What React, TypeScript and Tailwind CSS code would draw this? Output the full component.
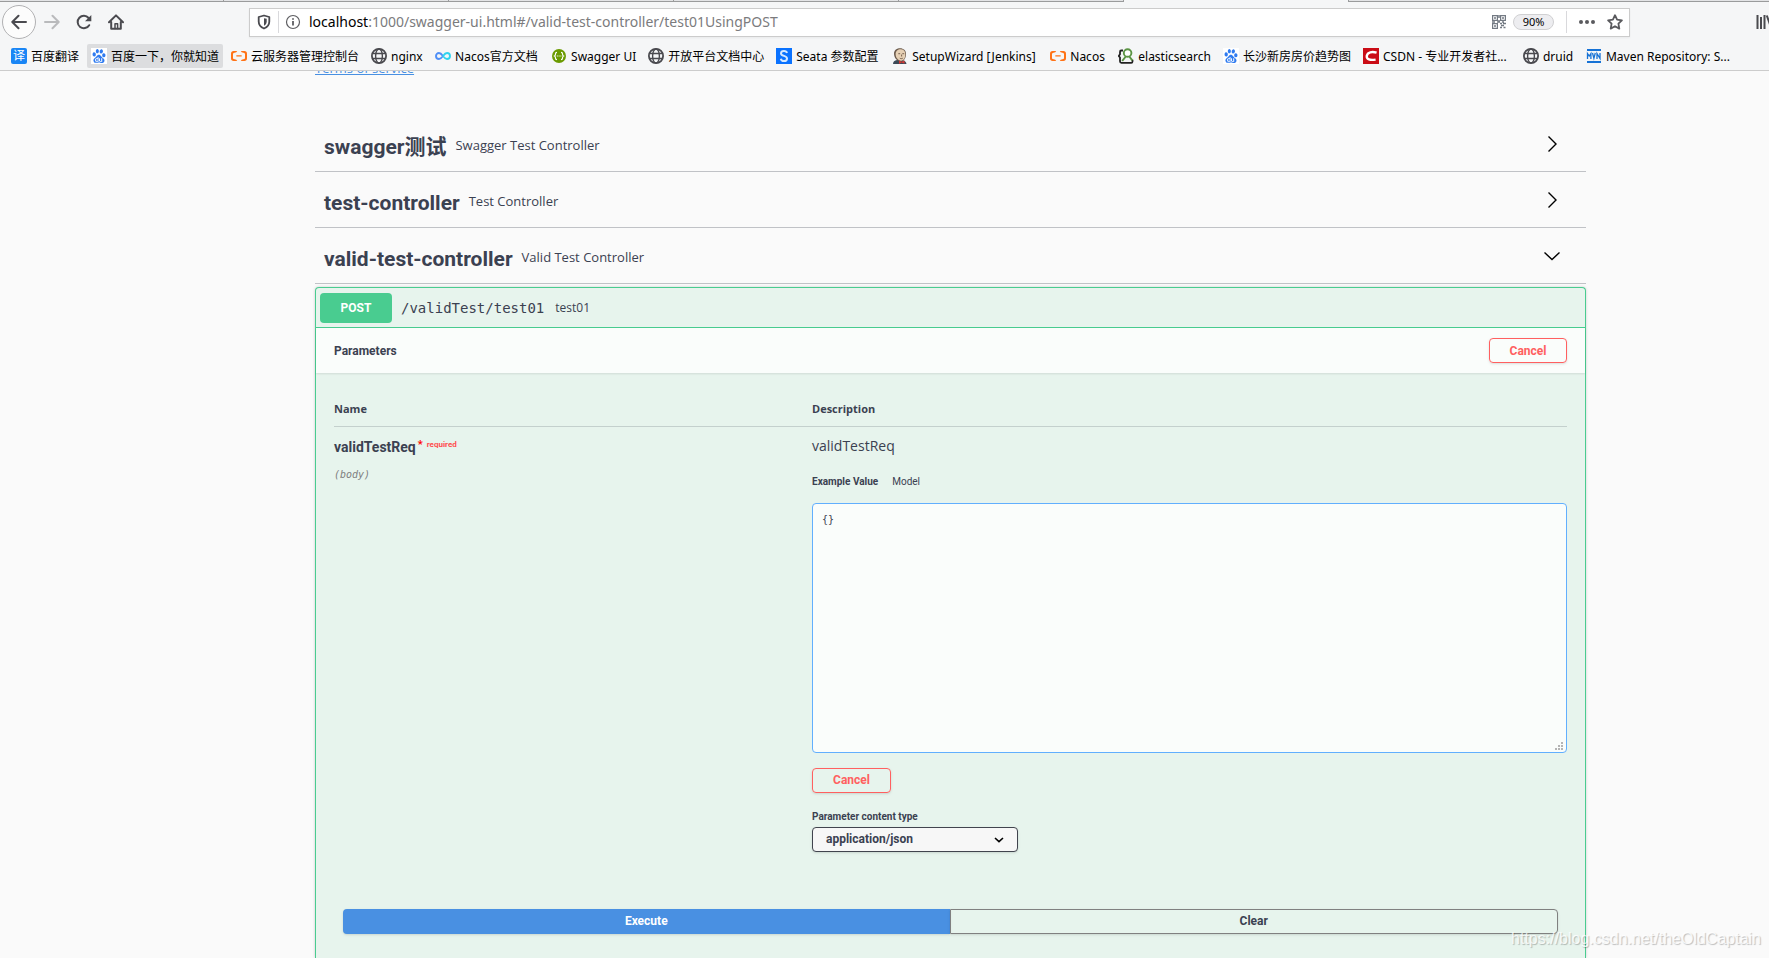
import React, { useState } from 'react';
import { SiAlibabacloud, SiBaidu } from 'react-icons/si';

const chromeFont = 'font-[Noto_Sans,Noto_Sans_CJK_SC,sans-serif]';
const uiFont = 'font-[Open_Sans,Noto_Sans_CJK_SC,sans-serif]';
const titleFont = 'font-[Roboto,Noto_Sans_CJK_SC,sans-serif]';
const monoFont = 'font-[DejaVu_Sans_Mono,monospace]';

const Globe = () => (
  <svg viewBox="0 0 16 16" className="size-4" fill="none" stroke="#4a4a4f" strokeWidth="1.4">
    <circle cx="8" cy="8" r="7.1" strokeWidth="1.8" />
    <ellipse cx="8" cy="8" rx="3.4" ry="7" />
    <path d="M1.5 5.5h13M1.5 10.5h13" />
  </svg>
);

const Translate = () => (
  <span className="size-4 rounded-xs bg-[#1a86f5] text-white text-xs leading-4 text-center">译</span>
);

const Baidu = () => (
  <span className="size-4 bg-white flex items-center justify-center">
    <SiBaidu className="size-3.5 text-[#2f7bf0]" />
  </span>
);

const Aliyun = () => <SiAlibabacloud className="size-4 text-[#ff7317]" />;

const Infinity = () => (
  <svg viewBox="0 0 16 16" className="size-4" fill="none" strokeWidth="1.9">
    <path d="M8 8C6.800 6.400 5.700 5 4 5a3 3 0 0 0 0 6c1.700 0 2.800-1.400 4-3" stroke="#4f8ff7" />
    <path d="M8 8c1.200-1.600 2.300-3 4-3a3 3 0 0 1 0 6c-1.700 0-2.800-1.400-4-3" stroke="#2fd3ee" />
  </svg>
);

const Swagger = () => (
  <svg viewBox="0 0 16 16" className="size-4">
    <circle cx="8" cy="8" r="7" fill="#6a9a00" />
    <path
      d="M6 4.300c-1.300 0-1.500.4-1.500 1.400S4.500 7.500 3.500 8c1 .5 1 1.300 1 2.300s.2 1.400 1.500 1.400M10 4.300c1.300 0 1.500.4 1.500 1.400s0 1.800 1 2.300c-1 .5-1 1.300-1 2.300s-.2 1.400-1.500 1.400"
      fill="none"
      stroke="#fff"
      strokeWidth="1.200"
    />
    <path d="M5.800 8h4.600" stroke="#fff" strokeWidth="1.200" strokeDasharray="1 .8" />
  </svg>
);

const Seata = () => (
  <svg viewBox="0 0 16 16" className="size-4">
    <path d="M0 0h16v16H0z" fill="#0a72ff" />
    <path
      d="M11 5C10.600 3.500 9.500 3 8 3 6.200 3 5 4 5 5.400c0 3 6 2 6 5C11 12 9.800 13 8 13s-2.900-.8-3.200-2.300"
      fill="none"
      stroke="#d5e9ff"
      strokeWidth="2"
    />
  </svg>
);

const Jenkins = () => (
  <svg viewBox="0 0 16 16" className="size-4">
    <path d="M1 16c0-2.500 1.500-3.500 4-4h5c3 .5 4 2 4.500 4z" fill="#3c4a57" />
    <path d="M2 5.500C2 2 5 .3 8.200.3S14 2.500 14 6s-1.500 7-5 7.400C5 13.500 2 10 2 5.500z" fill="#6b5a4c" />
    <path d="M3.600 6C3.600 3 5.800 1.200 8.600 1.200S13.300 3 13.300 6.200 12 12.500 9 12.700C6 12.600 3.600 9.500 3.600 6z" fill="#e6d0b4" />
    <path d="M6.300 5.700h1.900M10.300 5.700h1.900M7.800 10.200c1 .6 2 .6 3 0M9.600 6.500v2" fill="none" stroke="#5c4637" strokeWidth=".8" />
    <path d="m7 12.600 2.500 1.200 3-1.300v3.300l-3-1.200L7 15.900z" fill="#d33833" />
  </svg>
);

const Elastic = () => (
  <svg viewBox="0 0 16 16" className="size-4" fill="none">
    <path d="M5 2.500H3.200c-1 0-1.200.5-1.200 1.500v2.200L.8 8 2 9.500v3.800c0 1 .4 1.500 1.400 1.500h9.800c.9 0 1.300-.5 1.300-1.400v-1.600" stroke="#222" strokeWidth="1.800" />
    <circle cx="9.600" cy="5" r="3.800" fill="#fff" stroke="#5b9444" strokeWidth="1.900" />
    <path d="M7.800 8.500 4.200 13M11.300 8.500l3 3.800" stroke="#5b9444" strokeWidth="2" />
  </svg>
);

const Csdn = () => (
  <svg viewBox="0 0 16 16" className="size-4">
    <path d="M0 0h16v16H0z" fill="#ca0c16" />
    <path d="M13.600 4.600C9 3.300 4.500 4 3.800 7.800c-.6 3.800 3.300 4.600 8.800 3.800" fill="none" stroke="#fff" strokeWidth="2.400" />
  </svg>
);

const Maven = () => (
  <svg viewBox="0 0 16 16" className="size-4" fill="none" stroke="#1672d6">
    <path d="M1 2h14M1 14h14" strokeWidth="2" />
    <path d="M1.500 11V5.500L3.200 8l1.700-2.500V11M6.500 5l1.400 5.300L9.300 5M11 11V5.500l3 5V5" strokeWidth="1.300" />
  </svg>
);

const bookmarks = [
  { label: '百度翻译', Icon: Translate, width: 'min-w-[76px]' },
  { label: '百度一下，你就知道', Icon: Baidu, width: 'min-w-[136px]', active: true },
  { label: '云服务器管理控制台', Icon: Aliyun, width: 'min-w-[136px]' },
  { label: 'nginx', Icon: Globe, width: 'min-w-[60px]' },
  { label: 'Nacos官方文档', Icon: Infinity, width: 'min-w-[112px]' },
  { label: 'Swagger UI', Icon: Swagger, width: 'min-w-[93px]' },
  { label: '开放平台文档中心', Icon: Globe, width: 'min-w-[124px]' },
  { label: 'Seata 参数配置', Icon: Seata, width: 'min-w-[112px]' },
  { label: 'SetupWizard [Jenkins]', Icon: Jenkins, width: 'min-w-[154px]' },
  { label: 'Nacos', Icon: Aliyun, width: 'min-w-[64px]' },
  { label: 'elasticsearch', Icon: Elastic, width: 'min-w-[99px]' },
  { label: '长沙新房房价趋势图', Icon: Baidu, width: 'min-w-[136px]' },
  { label: 'CSDN - 专业开发者社...', Icon: Csdn, width: 'min-w-[156px]' },
  { label: 'druid', Icon: Globe, width: 'min-w-[59px]' },
  { label: 'Maven Repository: S...', Icon: Maven, width: 'min-w-[154px]' }
];

const controllers = [
  { name: 'swagger测试', description: 'Swagger Test Controller', open: false },
  { name: 'test-controller', description: 'Test Controller', open: false },
  { name: 'valid-test-controller', description: 'Valid Test Controller', open: true }
];

const TabStrip = () => (
  <div className="flex h-[2px]">
    {['w-56', 'w-[225px]', 'w-[225px]', 'w-[225px]', 'w-[225px]'].map((width, index) => (
      <div
        key={index}
        className={`${width} flex-none border-b border-r border-[#9a9b9c] bg-[#e3e4e6]`}
      />
    ))}
    <div className="w-[224px] flex-none" />
    <div className="flex-1 border-b border-l border-[#9a9b9c] bg-[#e3e4e6]" />
  </div>
);

const AddressBar = () => (
  <div className="flex h-[29px] flex-1 min-w-0 items-center border border-[#cccccc] bg-white pr-[10px] pl-[7px] shadow-xs">
    <svg viewBox="0 0 14 16" className="h-4 w-3.5 flex-none" fill="none" stroke="#4a4a4f">
      <path d="M7 1.500 12.300 3v4.500c0 3.500-2.300 5.800-5.300 7-3-1.200-5.300-3.500-5.300-7V3z" strokeWidth="1.800" strokeLinejoin="round" />
      <path d="M7 4.200v7.600c1.700-1 2.700-2.500 2.700-4.500V4.800z" fill="#4a4a4f" stroke="none" />
    </svg>
    <span className="ml-[7px] h-[22px] w-px bg-[#d9d9dc]" />
    <svg viewBox="0 0 16 16" className="ml-[6px] size-4 flex-none" fill="none" stroke="#5d5d61">
      <circle cx="8" cy="8" r="6.500" strokeWidth="1.200" />
      <path d="M8 7v4.500M8 4.200v1.600" strokeWidth="1.800" />
    </svg>
    <p className="ml-2 flex-1 truncate text-sm text-[#7b7b7d]">
      <span className="text-black">localhost</span>
      :1000/swagger-ui.html#/valid-test-controller/test01UsingPOST
    </p>
    <svg viewBox="0 0 14 14" className="size-3.5 flex-none" fill="none" stroke="#737a83">
      <path d="M.6.600h4.800v4.800H.6zM8.600.600h4.800v4.800H8.600zM.6 8.600h4.800v4.800H.6z" strokeWidth="1.200" />
      <path d="M2 3h2M10 3h2M2 11h2M7 0v3M7 5v2M0 7h3M5 7h3M8 8.500h2M11 8.500h3M9 10.500h3M8 12.500h2M11.500 12.500h2M10 7h2" strokeWidth="1.500" />
    </svg>
    <button className="ml-[7px] h-4 w-[41px] rounded-full border border-[#d0d0d2] bg-[#ededf0] text-[11px] leading-[14px] text-black">
      90%
    </button>
    <span className="ml-3 h-[22px] w-px bg-[#d9d9dc]" />
    <button aria-label="Page actions" className="ml-3">
      <svg viewBox="0 0 16 16" className="size-4" fill="#5a5a5e">
        <circle cx="2" cy="8" r="2" />
        <circle cx="8" cy="8" r="2" />
        <circle cx="14" cy="8" r="2" />
      </svg>
    </button>
    <button aria-label="Bookmark this page" className="ml-3 -mr-1">
      <svg viewBox="0 0 16 16" className="size-4" fill="none" stroke="#5a5a5e" strokeWidth="1.800" strokeLinejoin="round">
        <path d="m8 1.200 2.100 4.500 4.800.6-3.500 3.400.9 4.900L8 12.200l-4.300 2.400.9-4.900L1.100 6.300l4.800-.6z" />
      </svg>
    </button>
  </div>
);

const BrowserChrome = () => (
  <header className={`${chromeFont} overflow-hidden border-b border-[#cccccc] bg-[#f5f6f7]`}>
    <TabStrip />
    <div className="flex h-10 items-center">
      <nav className="flex w-[249px] flex-none items-center pl-0.5">
        <button
          aria-label="Back"
          className="flex size-[34px] items-center justify-center rounded-full border border-[#b1b1b3] bg-[#fcfcfc]"
        >
          <svg viewBox="0 0 16 16" className="size-4" fill="none" stroke="#4a4a4f" strokeWidth="2" strokeLinecap="round" strokeLinejoin="round">
            <path d="M15 8H1.500M7.500 1.800 1.300 8l6.200 6.200" />
          </svg>
        </button>
        <button aria-label="Forward" className="ml-2">
          <svg viewBox="0 0 16 16" className="size-4" fill="none" stroke="#b9babc" strokeWidth="2" strokeLinecap="round" strokeLinejoin="round">
            <path d="M1 8h13.500M8.500 1.800 14.700 8l-6.200 6.200" />
          </svg>
        </button>
        <button aria-label="Reload" className="ml-4">
          <svg viewBox="0 0 16 16" className="size-4" fill="none" stroke="#4a4a4f" strokeWidth="2" strokeLinecap="round">
            <path d="M13.200 11.200A6.200 6.200 0 1 1 12.600 4" />
            <path d="M15.300 1v6.300H9z" fill="#4a4a4f" stroke="none" />
          </svg>
        </button>
        <button aria-label="Home" className="ml-4">
          <svg viewBox="0 0 16 16" className="size-4" fill="none" stroke="#4a4a4f" strokeWidth="2" strokeLinecap="round" strokeLinejoin="round">
            <path d="M1 8.200 8 1.400l7 6.800M3.200 8v6.800h9.600V8" />
            <path d="M7 14.500V9.800h2.600v4.700" strokeWidth="1.500" />
          </svg>
        </button>
      </nav>
      <AddressBar />
      <div className="flex w-[139px] flex-none justify-end">
        <button aria-label="Library" className="w-[13px] overflow-hidden">
          <svg viewBox="0 0 16 16" className="size-4" stroke="#4a4a4f" strokeWidth="2">
            <path d="M1.500 1v14M5 3v12M8.500 1v14M10.800 1.500 15.500 15" />
          </svg>
        </button>
      </div>
    </div>
    <nav className="flex h-7 items-center gap-1 pl-[7px]">
      {bookmarks.map(({ label, Icon, width, active }, index) => (
        <a
          key={index}
          href="#"
          className={`${width} ${
            active ? 'bg-[#dcdddf]' : ''
          } flex h-6 flex-none items-center gap-1 rounded-xs px-1 text-xs whitespace-nowrap text-black`}
        >
          <Icon />
          <span className="pt-px">{label}</span>
        </a>
      ))}
    </nav>
  </header>
);

const Chevron = ({ open }: { open: boolean }) => (
  <svg viewBox="0 0 20 20" className="size-5" fill="none" stroke="#000" strokeWidth="1.400">
    {open ? <path d="m2.500 6.500 7.500 7 7.500-7" /> : <path d="m6.500 2.500 7.500 7.500-7.500 7.500" />}
  </svg>
);

const ControllerRow = ({ name, description, open }: (typeof controllers)[number]) => (
  <h4 className="border-b border-[#3b4151]/30">
    <button aria-expanded={open} className="flex h-[55px] w-full items-center pr-6 pl-[9px] text-left">
      <span className={`${titleFont} pt-1.5 text-[21px] leading-7 font-bold`}>{name}</span>
      <span className="flex-1 pt-1 pl-[9px] text-[13px]">{description}</span>
      <Chevron open={open} />
    </button>
  </h4>
);

const CancelButton = ({ width }: { width: string }) => (
  <button
    className={`${width} ${titleFont} block h-[25px] rounded-sm border border-[#ff6060] text-xs font-bold text-[#ff6060] shadow-sm`}
  >
    Cancel
  </button>
);

// dotted grip in the corner of the body editor
const ResizeGrip = () => (
  <svg viewBox="0 0 8 8" className="pointer-events-none absolute right-1 bottom-[3px] size-2" fill="#b4b4b4">
    <path d="M6 0h2v2H6zM3 3h2v2H3zM6 3h2v2H6zM0 6h2v2H0zM3 6h2v2H3zM6 6h2v2H6z" />
  </svg>
);

const ParametersTable = () => {
  const [body, setBody] = useState('{}');

  return (
    <table className="w-full table-fixed border-collapse text-left align-top">
      <thead>
        <tr className={`${uiFont} border-b border-[#3b4151]/20 text-[11px] font-bold`}>
          <th className="h-[35px] w-[478px] pt-0.5">Name</th>
          <th className="pt-0.5">Description</th>
        </tr>
      </thead>
      <tbody>
        <tr>
          <td className="pt-2 align-top">
            <div className={`${titleFont} flex text-sm leading-6 font-bold`}>
              validTestReq
              <span className="ml-0.5 text-[11px] leading-5 text-[#ff0000]">*</span>
              <span className="ml-1 text-[8px] leading-5 text-[#ff4d4d]">required</span>
            </div>
            <div className={`${monoFont} mt-2 text-[10px] leading-4 text-[#808080] italic`}>
              (body)
            </div>
          </td>
          <td className="pt-[7px] align-top">
            <p className="text-sm leading-6">validTestReq</p>
            <div className={`${titleFont} mt-4 flex gap-[14px] text-[10px] leading-4`}>
              <button className="font-bold">Example Value</button>
              <button>Model</button>
            </div>
            <div className="relative mt-[13px]">
              <textarea
                aria-label="validTestReq"
                className={`${monoFont} block h-[250px] w-full resize-none rounded-sm border border-[#61affe] bg-white/80 px-[9px] py-2 text-[10px] leading-4 outline-none`}
                value={body}
                onChange={(e) => setBody(e.target.value)}
              />
              <ResizeGrip />
            </div>
            <div className="mt-[15px]">
              <CancelButton width="w-[79px]" />
            </div>
            <label
              htmlFor="contentType"
              className={`${titleFont} mt-4 block text-[10px] leading-4 font-bold`}
            >
              Parameter content type
            </label>
            <div className="relative mt-0.5 w-[206px]">
              <select
                id="contentType"
                className={`${titleFont} block h-[25px] w-full appearance-none rounded-sm border border-[#41444e] bg-[#f7f7f7] px-[13px] text-xs font-bold shadow-sm`}
              >
                <option>application/json</option>
              </select>
              <svg viewBox="0 0 10 6" className="pointer-events-none absolute top-[10px] right-[14px] h-[6px] w-[10px]" fill="none" stroke="#000" strokeWidth="1.600">
                <path d="m1 1 4 3.600L9 1" />
              </svg>
            </div>
          </td>
        </tr>
      </tbody>
    </table>
  );
};

const Operation = () => (
  <section className="mt-[3px] flex flex-1 flex-col rounded-t-sm border border-b-0 border-[#49cc90] bg-[#e7f4ed] shadow-[0_0_3px_rgba(0,0,0,0.19)]">
    <button className="flex h-10 items-center border-b border-[#49cc90] pl-1 text-left">
      <span
        className={`${titleFont} h-[30px] w-[72px] rounded-sm bg-[#49cc90] text-center text-xs leading-[30px] font-bold text-white`}
      >
        POST
      </span>
      <span className={`${monoFont} ml-[9px] pt-px text-sm`}>/validTest/test01</span>
      <span className="ml-[11px] text-xs">test01</span>
    </button>
    <div className="flex h-[45px] items-center justify-between bg-white/80 pr-[18px] pl-[18px] shadow-[0_1px_2px_rgba(0,0,0,0.1)]">
      <h4 className={`${titleFont} text-xs font-bold`}>Parameters</h4>
      <CancelButton width="w-[78px]" />
    </div>
    <div className="px-[18px] pt-[18px]">
      <ParametersTable />
    </div>
    <div className={`${titleFont} mt-[57px] flex px-[27px] pb-6 text-xs font-bold`}>
      <button className="h-[25px] flex-1 rounded-l-sm bg-[#4990e2] text-white shadow-sm">Execute</button>
      <button className="h-[25px] flex-1 rounded-r-sm border border-[#808080] shadow-sm">Clear</button>
    </div>
  </section>
);

const App = () => (
  <div className="relative flex min-h-screen flex-col bg-[#fafafa]">
    <BrowserChrome />
    <main
      className={`${uiFont} flex flex-1 flex-col overflow-hidden pr-[183px] pl-[315px] text-[#3b4151]`}
    >
      <a href="#" className="-mt-[11px] self-start text-[13px] leading-4 text-[#4990e2] underline">
        Terms of service
      </a>
      <div className="mt-10">
        {controllers.map((one) => (
          <ControllerRow key={one.name} {...one} />
        ))}
      </div>
      <Operation />
    </main>
    <span className="pointer-events-none absolute right-2 bottom-[7px] font-[Liberation_Sans,Arial,sans-serif] text-base text-white/80 [text-shadow:1px_1px_1px_rgba(0,0,0,0.25)]">
      https://blog.csdn.net/theOldCaptain
    </span>
  </div>
);

export default App;
